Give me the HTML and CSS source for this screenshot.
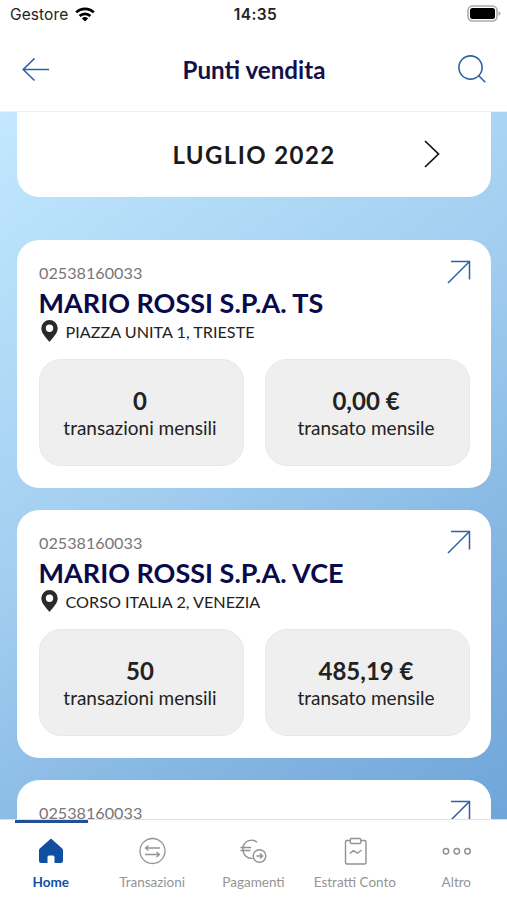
FILE: index.html
```html
<!DOCTYPE html>
<html lang="it">
<head>
<meta charset="utf-8">
<title>Punti vendita</title>
<link rel="stylesheet" href="styles.css">
</head>
<body>
<div class="app">
  <div class="status">
    <div class="carrier"><span>Gestore</span>
      <svg width="20" height="15" viewBox="0 0 20 15"><g fill="none" stroke="#000" stroke-width="2.7"><path d="M1.2 5.4a12.5 12.5 0 0 1 17.6 0"/><path d="M4.6 9a7.7 7.7 0 0 1 10.8 0"/></g><path d="M6.9 11.4a4.4 4.4 0 0 1 6.2 0L10 14.6z"/></svg>
    </div>
    <div class="clock">14:35</div>
    <svg class="battery" width="34" height="18" viewBox="0 0 34 18"><rect x="1" y="1" width="29" height="15" rx="4.5" fill="#fff" stroke="#aaa" stroke-width="1.6"/><rect x="3" y="3" width="25" height="11" rx="2.5"/><path d="M31.5 6.2q2 .6 2 2.300t-2 2.300z" fill="#aaa"/></svg>
  </div>
  <header class="header">
    <svg width="28" height="24" viewBox="0 0 28 24" fill="none" stroke="#2c61a8" stroke-width="1.6"><path d="M27 11.500H1M12.500.500L1.200 11.500l11.300 11"/></svg>
    <h1>Punti vendita</h1>
    <svg width="29" height="29" viewBox="0 0 29 29" fill="none" stroke="#2c61a8" stroke-width="1.6"><circle cx="12.500" cy="12.500" r="11.600"/><path d="M20.500 20.500l6.800 6.800"/></svg>
  </header>
  <main class="content">
    <section class="month"><span>LUGLIO 2022</span>
      <svg width="16" height="28" viewBox="0 0 16 28" fill="none" stroke="#111" stroke-width="1.7"><path d="M1 1l13.500 13L1 27"/></svg>
    </section>
    <article class="card">
      <div class="top"><span class="code">02538160033</span><svg class="open" width="24" height="24" viewBox="0 0 24 24" fill="none" stroke="#2c61a8" stroke-width="1.5"><path d="M1 23L22.500 1.500M4 1.500h18.500v18"/></svg></div>
      <h2>MARIO ROSSI S.P.A. TS</h2>
      <div class="place"><svg width="17" height="22" viewBox="0 0 17 22"><path fill="#2a2a2a" fill-rule="evenodd" d="M8.500 0A8.200 8.200 0 0 0 .3 8.200C.3 13.300 5 17.400 8.500 22 12 17.400 16.700 13.300 16.700 8.200A8.200 8.200 0 0 0 8.500 0zm0 4.600a3.700 3.700 0 1 1 0 7.400 3.700 3.700 0 0 1 0-7.400z"/></svg><span>PIAZZA UNITA 1, TRIESTE</span></div>
      <div class="stats">
        <div class="stat"><strong>0</strong><span>transazioni mensili</span></div>
        <div class="stat"><strong>0,00 €</strong><span>transato mensile</span></div>
      </div>
    </article>
    <article class="card">
      <div class="top"><span class="code">02538160033</span><svg class="open" width="24" height="24" viewBox="0 0 24 24" fill="none" stroke="#2c61a8" stroke-width="1.5"><path d="M1 23L22.500 1.500M4 1.500h18.500v18"/></svg></div>
      <h2>MARIO ROSSI S.P.A. VCE</h2>
      <div class="place"><svg width="17" height="22" viewBox="0 0 17 22"><path fill="#2a2a2a" fill-rule="evenodd" d="M8.500 0A8.200 8.200 0 0 0 .3 8.200C.3 13.300 5 17.400 8.500 22 12 17.400 16.700 13.300 16.700 8.200A8.200 8.200 0 0 0 8.500 0zm0 4.600a3.700 3.700 0 1 1 0 7.400 3.700 3.700 0 0 1 0-7.400z"/></svg><span>CORSO ITALIA 2, VENEZIA</span></div>
      <div class="stats">
        <div class="stat"><strong>50</strong><span>transazioni mensili</span></div>
        <div class="stat"><strong>485,19 €</strong><span>transato mensile</span></div>
      </div>
    </article>
    <article class="card">
      <div class="top"><span class="code">02538160033</span><svg class="open" width="24" height="24" viewBox="0 0 24 24" fill="none" stroke="#2c61a8" stroke-width="1.5"><path d="M1 23L22.500 1.500M4 1.500h18.500v18"/></svg></div>
    </article>
  </main>
  <nav class="tabs">
    <a class="tab active"><svg width="30" height="30" viewBox="0 0 30 30"><path fill="#114fa3" d="M15 2.500L26.200 12.500q.8.700.8 1.800V25q0 2-2 2h-6.500v-6q0-1.500-1.500-1.500h-4q-1.500 0-1.500 1.500v6H5q-2 0-2-2V14.300q0-1.100.8-1.800z"/></svg><span>Home</span></a>
    <a class="tab"><svg width="30" height="30" viewBox="0 0 30 30" fill="none" stroke="#929292" stroke-width="1.300"><circle cx="15.500" cy="15" r="12.500"/><path d="M23 12H8.500M11.500 9.500L8.500 12l3 2.500M8 18.500h14.500M19.500 16l3 2.500-3 2.500"/></svg><span>Transazioni</span></a>
    <a class="tab"><svg width="30" height="30" viewBox="0 0 30 30" fill="none" stroke="#929292" stroke-width="1.400"><path d="M19 6.300A8.800 9.300 0 0 0 5 10.800V15.200A8.800 8.800 0 0 0 14.500 22.300M2.500 11.500h10.500M2.500 14.500h10"/><circle cx="21.500" cy="20" r="6.300"/><path d="M18.500 20h6M22 17.500l2.500 2.500-2.500 2.500"/></svg><span>Pagamenti</span></a>
    <a class="tab"><svg width="30" height="30" viewBox="0 0 30 30" fill="none" stroke="#929292" stroke-width="1.400"><path d="M10 4.500H7q-1.500 0-1.500 1.500V26.500q0 1.500 1.500 1.500h17.500q1.500 0 1.500-1.500V6q0-1.500-1.500-1.500H21"/><rect x="10.300" y="2.500" width="10.500" height="5" rx="1.200"/><path d="M9.800 17.500l3.500-2.800 4.200 2.500 4-3.200"/></svg><span>Estratti Conto</span></a>
    <a class="tab"><svg width="30" height="30" viewBox="0 0 30 30" fill="none" stroke="#929292" stroke-width="1.500"><circle cx="5" cy="15.200" r="2.700"/><circle cx="15.800" cy="15.200" r="2.700"/><circle cx="26.500" cy="15.200" r="2.700"/></svg><span>Altro</span></a>
  </nav>
</div>
</body>
</html>
```
FILE: styles.css
```css
* { box-sizing: border-box; }
body { margin: 0; font-family: Lato, sans-serif; }
svg { display: block; flex: none; }
.app { width: 507px; height: 900px; overflow: hidden; display: flex; flex-direction: column; background: #fff; }
.status { height: 30px; flex: none; display: grid; grid-template-columns: 1fr auto 1fr; align-items: center; padding: 0 6px 0 10px; font-family: Inter, sans-serif; font-size: 15.500px; color: #222; }
.carrier { display: flex; align-items: center; gap: 7px; letter-spacing: .1px; margin-top: -1px; }
.clock { font-weight: 600; letter-spacing: .4px; margin-top: -1px; }
.battery { justify-self: end; margin-top: -2px; }
.header { height: 82px; flex: none; display: flex; align-items: center; justify-content: space-between; padding: 0 20px 2px 22px; border-bottom: 1px solid #eef1f3; }
h1 { margin: 0; font-size: 24.200px; line-height: 30px; font-weight: 700; color: #12124a; }
.content { flex: 1; min-height: 0; overflow: hidden; display: flex; flex-direction: column; gap: 22px; padding: 0 16px 0 17px; background: linear-gradient(145deg, #c3e8ff 0%, #b2dbf7 22%, #a2cef0 45%, #87b8e3 72%, #6fa5d9 100%); }
.month { height: 84.500px; flex: none; margin-bottom: 21px; border-radius: 0 0 22px 22px; background: #fff; display: grid; grid-template-columns: 1fr auto 1fr; align-items: center; }
.month span { grid-column: 2; font-size: 24px; font-weight: 700; letter-spacing: 1.400px; color: #1a1a1a; }
.month svg { justify-self: end; margin-right: 51px; }
.card { height: 248px; flex: none; background: #fff; border-radius: 22px; padding: 20px 20px 0 22px; }
.top { height: 26px; display: flex; justify-content: space-between; }
.code { font-size: 16.200px; line-height: 26px; color: #777; }
h2 { margin: 0 0 0 -.5px; font-size: 27px; line-height: 33px; font-weight: 700; color: #0a0a4a; white-space: nowrap; }
.place { display: flex; align-items: center; height: 25px; gap: 7.500px; padding-left: 2px; font-size: 16.200px; color: #222; }
.stats { display: grid; grid-template-columns: 1fr 1fr; gap: 21px; margin: 15px 1.500px 0 -.5px; }
.stat { height: 107.500px; border: 1px solid #e8e8e8; border-radius: 22px; background: #efefef; display: flex; flex-direction: column; align-items: center; padding: 26px 2px 0 0; color: #222; }
.stat strong { font-size: 24px; line-height: 30px; font-weight: 700; }
.stat span { font-size: 19px; line-height: 24px; }
.tabs { height: 81px; flex: none; display: grid; grid-template-columns: repeat(5, 1fr); border-top: 1px solid #dde1e5; background: #fff; }
.tab { display: flex; flex-direction: column; align-items: center; padding-top: 16px; font-size: 13.500px; line-height: 18px; color: #959595; gap: 7px; white-space: nowrap; }
.tab.active { color: #114fa3; font-weight: 700; background: linear-gradient(#234f96, #234f96) 15px 0 / 73px 3px no-repeat; }
```
